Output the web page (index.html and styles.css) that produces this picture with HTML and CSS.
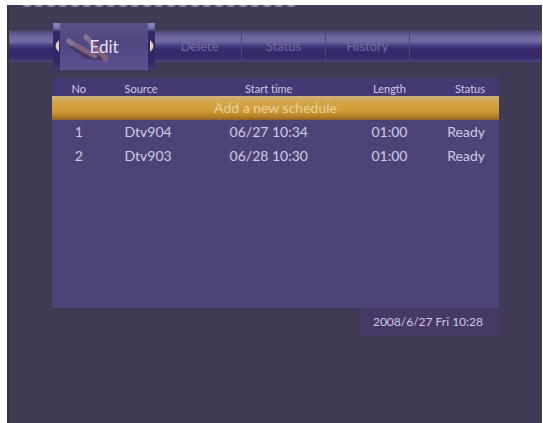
FILE: index.html
```html
<!DOCTYPE html>
<html lang="en">
<head>
<meta charset="utf-8">
<meta name="viewport" content="width=device-width, initial-scale=1">
<title>Schedule</title>
<link rel="stylesheet" href="styles.css">
</head>
<body>
<main class="screen">
  <div class="cutoff" aria-hidden="true"></div>
  <nav class="tabs">
    <button class="tab tab-active" type="button">
      <span class="edge"><svg width="4" height="12" viewBox="0 0 4 12"><path d="M4 0Q-3 6 4 12z"/></svg></span>
      <span class="face">
        <svg class="pencils" width="46" height="30" viewBox="0 0 46 30" aria-hidden="true">
          <path class="shade" d="M8 13l14 10 14 2"/>
          <path class="pencil" d="M23 5l19 21"/>
          <path class="pencil" d="M6 9l25 14"/>
          <path class="tip" d="M5 8l3 2M22 4l3 3"/>
        </svg>
        <span class="name">Edit</span>
      </span>
      <span class="edge"><svg width="4" height="12" viewBox="0 0 4 12"><path d="M0 0Q7 6 0 12z"/></svg></span>
    </button>
    <button class="tab" type="button">Delete</button>
    <button class="tab" type="button">Status</button>
    <button class="tab" type="button">History</button>
  </nav>
  <section class="content">
    <div class="panel">
      <table class="schedule">
        <colgroup><col class="c-no"><col class="c-source"><col class="c-start"><col class="c-length"><col class="c-status"></colgroup>
        <thead><tr><th>No</th><th class="source">Source</th><th>Start time</th><th>Length</th><th class="status">Status</th></tr></thead>
        <tbody>
          <tr class="add"><td colspan="5"><button type="button">Add a new schedule</button></td></tr>
          <tr><td>1</td><td>Dtv904</td><td>06/27 10:34</td><td>01:00</td><td class="status">Ready</td></tr>
          <tr><td>2</td><td>Dtv903</td><td>06/28 10:30</td><td>01:00</td><td class="status">Ready</td></tr>
        </tbody>
      </table>
    </div>
    <time class="clock" datetime="2008-06-27T10:28">2008/6/27 Fri 10:28</time>
  </section>
</main>
</body>
</html>
```
FILE: styles.css
```css
* { box-sizing: border-box; }
body {
  margin: 0;
  padding: 5px 1px 0 7px;
  min-height: 100vh;
  display: flex;
  background: #fff;
  color: #d0cae3;
  font-family: Lato, "Liberation Sans", sans-serif;
  font-variant-ligatures: none;
}
button {
  border: 0;
  padding: 0;
  background: none;
  color: inherit;
  font: inherit;
}
.screen {
  flex: 1;
  background: #403a54;
  border-left: 2px solid #37313f;
}
.cutoff {
  height: 2px;
  margin-left: 13px;
  width: 52%;
  background: repeating-linear-gradient(90deg, #403a54 0, #8f8b9f 3px, #8f8b9f 7px, #403a54 10px, #403a54 12px);
}
.tabs {
  display: flex;
  align-items: center;
  height: 32px;
  margin-top: 23px;
  padding-left: 44px;
  background: linear-gradient(#49406b 0, #6d68a0 7px, #6d68a0 12px, #423b80 16px, #35296b 20px, #35296b 28px, #4c447c 31px, #453e68 32px);
}
.tab {
  width: 84px;
  height: 30px;
  color: #716ba0;
  font-size: 13px;
  border-right: 1px solid #4d457f;
}
.tab-active {
  display: flex;
  width: 102px;
  height: 47px;
  margin-right: 3px;
  border: 0;
  color: #e6e1f0;
  font-size: 17px;
}
.edge {
  display: flex;
  align-items: center;
  justify-content: center;
  width: 7px;
  height: 100%;
  background: linear-gradient(#8b8bc0 0, #7272ad 5px, #2f2868 9px, #2f2868 38px, #3e366b 47px);
}
.edge svg { fill: #e9cfb5; }
.face {
  flex: 1;
  position: relative;
  display: grid;
  place-items: center;
  height: 100%;
  background: linear-gradient(#5b5289, #504682 40%, #5c5290);
}
.pencils {
  position: absolute;
  left: 4px;
  top: 10px;
  fill: none;
  stroke-width: 5;
  stroke-linecap: round;
}
.shade { stroke: #443966; }
.pencil { stroke: #84607a; }
.tip { stroke: #857396; }
.name { position: relative; }
.content {
  display: flex;
  flex-direction: column;
  margin: 16px 43px 0 43px;
}
.panel {
  min-height: 230px;
  background: #4c4476;
}
.schedule {
  width: 100%;
  table-layout: fixed;
  border-collapse: collapse;
  text-align: center;
  font-size: 14px;
}
.c-no { width: 12%; }
.c-source { width: 19%; }
.c-start { width: 35%; }
.c-length { width: 19%; }
.c-status { width: 15%; }
.schedule th {
  height: 18px;
  padding: 3px 0 0;
  background: #443974;
  font-size: 11px;
  font-weight: 400;
  line-height: 15px;
}
.schedule td {
  height: 24px;
  padding: 0;
  line-height: 24px;
}
.schedule .source { padding-right: 14px; }
.schedule .status {
  padding-right: 14px;
  text-align: right;
}
.add {
  background: linear-gradient(#d0b17e 0, #d5a44b 6px, #d29d37 14px, #b98424 20px, #8b622e 24px);
  color: #e9d29e;
}
.add button {
  width: 100%;
  height: 24px;
}
.clock {
  align-self: flex-end;
  padding: 4px 16px 4px 13px;
  background: #463963;
  font-size: 12px;
  line-height: 20px;
}
```
